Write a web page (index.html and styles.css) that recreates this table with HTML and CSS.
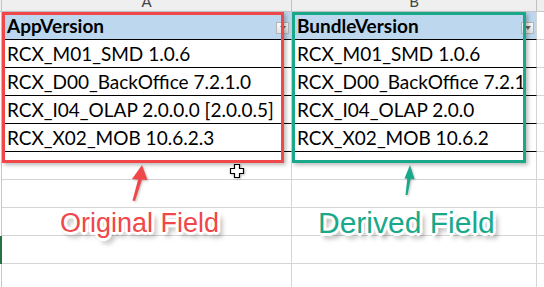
FILE: index.html
```
<!DOCTYPE html>
<html>
<head>
<meta charset="utf-8">
<link rel="stylesheet" href="styles.css">
</head>
<body>
<div class="sheet">
  <div class="colbar">
    <div class="rh"></div>
    <div class="ca colname"><span>A</span></div>
    <div class="cb colname"><span>B</span></div>
    <div class="cc"></div>
  </div>
  <div class="row">
    <div class="rh"></div>
    <div class="ca cell th t">AppVersion<span class="filter"></span></div>
    <div class="cb cell th t">BundleVersion<span class="filter"></span></div>
    <div class="cc cell"></div>
  </div>
  <div class="row">
    <div class="rh"></div>
    <div class="ca cell t">RCX_M01_SMD 1.0.6</div>
    <div class="cb cell t">RCX_M01_SMD 1.0.6</div>
    <div class="cc cell"></div>
  </div>
  <div class="row">
    <div class="rh"></div>
    <div class="ca cell t">RCX_D00_BackOffice 7.2.1.0</div>
    <div class="cb cell t">RCX_D00_BackOffice 7.2.1</div>
    <div class="cc cell"></div>
  </div>
  <div class="row">
    <div class="rh"></div>
    <div class="ca cell t">RCX_I04_OLAP 2.0.0.0 [2.0.0.5]</div>
    <div class="cb cell t">RCX_I04_OLAP 2.0.0</div>
    <div class="cc cell"></div>
  </div>
  <div class="row">
    <div class="rh"></div>
    <div class="ca cell t">RCX_X02_MOB 10.6.2.3</div>
    <div class="cb cell t">RCX_X02_MOB 10.6.2</div>
    <div class="cc cell"></div>
  </div>
  <div class="row">
    <div class="rh"></div>
    <div class="ca cell"></div>
    <div class="cb cell"></div>
    <div class="cc cell"></div>
  </div>
  <div class="row">
    <div class="rh"></div>
    <div class="ca cell"></div>
    <div class="cb cell"></div>
    <div class="cc cell"></div>
  </div>
  <div class="row">
    <div class="rh"></div>
    <div class="ca cell"></div>
    <div class="cb cell"></div>
    <div class="cc cell"></div>
  </div>
  <div class="row">
    <div class="rh sel"></div>
    <div class="ca cell"></div>
    <div class="cb cell"></div>
    <div class="cc cell"></div>
  </div>
  <div class="row">
    <div class="rh"></div>
    <div class="ca cell"></div>
    <div class="cb cell"></div>
    <div class="cc cell"></div>
  </div>

  <div class="box box-red"></div>
  <div class="box box-green"></div>

  <svg class="ann" width="544" height="287" viewBox="0 0 544 287">
    <g fill="#f0474a">
      <path d="M138.5 178 L142.5 178 L135 201 L132.5 200.5 Z"/>
      <path d="M142 165 L147.5 180 L132 179 Z"/>
    </g>
    <g fill="#19a98a">
      <path d="M407.5 177 L411 177 L407.5 195 L405.5 195 Z"/>
      <path d="M410 165 L414.5 179 L404.5 178.5 Z"/>
    </g>
    <path d="M234.5 164.5 h5 v4 h4 v5 h-4 v4 h-5 v-4 h-4 v-5 h4 z" fill="#fff" stroke="#000" stroke-width="1.2"/>
  </svg>

  <div class="label label-red">Original Field</div>
  <div class="label label-green">Derived Field</div>
</div>
</body>
</html>
```
FILE: styles.css
```
* { box-sizing: border-box; margin: 0; padding: 0; }
html, body { width: 544px; height: 287px; overflow: hidden; background: #fff; }
body { font-family: Lato, "Liberation Sans", sans-serif; color: #000; }

.sheet { position: relative; width: 544px; height: 287px; overflow: hidden; }

.colbar { display: flex; height: 12px; background: #efefef; border-bottom: 1px solid #c6c6c6; }
.colbar .ca, .colbar .cb { border-right: 1px solid #c2c2c2; }
.colname { overflow: hidden; text-align: center; font-size: 15px; color: #444; }
.colname span { display: block; line-height: 15px; margin-top: -6px; }

.row { display: flex; height: 28px; }
.rh { width: 2px; flex: none; border-right: 1px solid #c6c6c6; }
.rh.sel { background: #217346; border-right-color: #217346; }
.ca { width: 290px; flex: none; border-right: 1px solid #d4d4d4; }
.cb { width: 245px; flex: none; border-right: 1px solid #d4d4d4; }
.cc { flex: 1; }

.cell { border-bottom: 1px solid #d4d4d4; font-size: 19px; line-height: 27px; padding-left: 5px; white-space: nowrap; }
.cell.t { border-bottom-color: #000; }
.th { background: #bdd7ee; font-weight: 700; display: flex; justify-content: space-between; }

.filter { width: 13px; height: 12px; align-self: flex-end; margin: 0 2px 5px 0; border: 1px solid #b4b4b4; background: linear-gradient(#fbfbfb, #e2e2e2); display: flex; align-items: flex-end; justify-content: flex-end; padding: 0 2px 3px 0; }
.filter::after { content: ""; border-top: 4px solid #666; border-left: 3px solid transparent; border-right: 3px solid transparent; }

.box { position: absolute; top: 12px; height: 151px; border: 3px solid; box-shadow: 2px 2px 4px rgba(0,0,0,0.28); }
.box-red { left: 2px; width: 282px; border-color: #f0474a; }
.box-green { left: 292px; width: 234px; border-color: #19a98a; }

.ann { position: absolute; left: 0; top: 0; pointer-events: none; filter: drop-shadow(1px 1px 1px rgba(0,0,0,0.25)); }

.label { position: absolute; font-family: "Liberation Sans", Arial, sans-serif; line-height: 1; white-space: nowrap;
  text-shadow: -2px -2px 0 #fff, 2px -2px 0 #fff, -2px 2px 0 #fff, 2px 2px 0 #fff, 0 -3px 0 #fff, 0 3px 0 #fff, -3px 0 0 #fff, 3px 0 0 #fff, 4px 5px 5px rgba(0,0,0,0.45); }
.label-red { left: 60px; top: 210px; font-size: 27px; color: #f0474a; }
.label-green { left: 318px; top: 208px; font-size: 30px; color: #19a98a; }
```
